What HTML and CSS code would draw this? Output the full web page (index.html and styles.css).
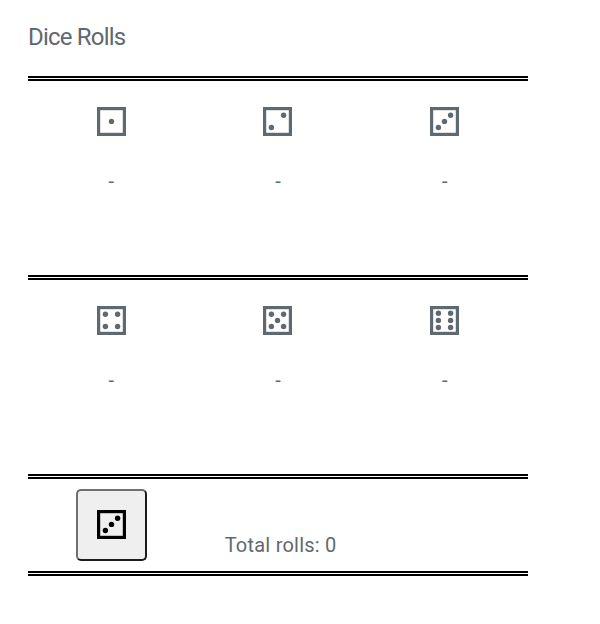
FILE: index.html
```html
<!DOCTYPE html>
<html lang="en"><head><meta charset="utf-8"><title>Dice Rolls</title>
<link rel="stylesheet" href="styles.css"></head>
<body>
<main class="board">
<h1 class="title">Dice Rolls</h1>
<section class="row">
<div class="cell"><svg class="die" viewBox="0 0 29 29"><rect x="1.6" y="1.6" width="25.8" height="25.8"/><circle cx="14.5" cy="14.4" r="2.7"/></svg><p class="count">-</p></div>
<div class="cell"><svg class="die" viewBox="0 0 29 29"><rect x="1.6" y="1.6" width="25.8" height="25.8"/><circle cx="20.6" cy="8.3" r="2.7"/><circle cx="8.4" cy="20.5" r="2.7"/></svg><p class="count">-</p></div>
<div class="cell"><svg class="die" viewBox="0 0 29 29"><rect x="1.6" y="1.6" width="25.8" height="25.8"/><circle cx="20.6" cy="8.3" r="2.7"/><circle cx="14.5" cy="14.4" r="2.7"/><circle cx="8.4" cy="20.5" r="2.7"/></svg><p class="count">-</p></div>
</section>
<section class="row">
<div class="cell"><svg class="die" viewBox="0 0 29 29"><rect x="1.6" y="1.6" width="25.8" height="25.8"/><circle cx="8.4" cy="8.3" r="2.7"/><circle cx="20.6" cy="8.3" r="2.7"/><circle cx="8.4" cy="20.5" r="2.7"/><circle cx="20.6" cy="20.5" r="2.7"/></svg><p class="count">-</p></div>
<div class="cell"><svg class="die" viewBox="0 0 29 29"><rect x="1.6" y="1.6" width="25.8" height="25.8"/><circle cx="8.4" cy="8.3" r="2.7"/><circle cx="20.6" cy="8.3" r="2.7"/><circle cx="14.5" cy="14.4" r="2.7"/><circle cx="8.4" cy="20.5" r="2.7"/><circle cx="20.6" cy="20.5" r="2.7"/></svg><p class="count">-</p></div>
<div class="cell"><svg class="die" viewBox="0 0 29 29"><rect x="1.6" y="1.6" width="25.8" height="25.8"/><circle cx="8.4" cy="7.3" r="2.7"/><circle cx="20.6" cy="7.3" r="2.7"/><circle cx="8.4" cy="14.4" r="2.7"/><circle cx="20.6" cy="14.4" r="2.7"/><circle cx="8.4" cy="21.5" r="2.7"/><circle cx="20.6" cy="21.5" r="2.7"/></svg><p class="count">-</p></div>
</section>
<footer class="controls">
<button class="roll" type="button" aria-label="Roll"><svg class="die" viewBox="0 0 29 29"><rect x="1.6" y="1.6" width="25.8" height="25.8"/><circle cx="20.6" cy="8.3" r="2.7"/><circle cx="14.5" cy="14.4" r="2.7"/><circle cx="8.4" cy="20.5" r="2.7"/></svg></button>
<p class="total">Total rolls: 0</p>
</footer>
</main>
</body></html>
```
FILE: styles.css
```css
* { box-sizing: border-box; }
body { margin: 0; background: #fff; color: #5f6971; font-family: Roboto, sans-serif; }
.board { width: 500px; margin-left: 28px; }
.title { height: 76px; margin: 0; padding-top: 22px; font-size: 24px; line-height: 30px; font-weight: 400; letter-spacing: -0.8px; }
.row { display: grid; grid-template-columns: repeat(3, 1fr); height: 199px; border-top: 5px double #000; }
.cell { display: flex; flex-direction: column; align-items: center; padding-top: 26px; }
.die { display: block; width: 29px; height: 29px; }
.die rect { fill: none; stroke: currentColor; stroke-width: 3.2; }
.die circle { fill: currentColor; }
.count { margin: 33px 0 0; font-size: 20px; line-height: 24px; }
.controls { display: grid; grid-template-columns: 1fr 2fr; height: 102px; border-top: 5px double #000; border-bottom: 5px double #000; }
.roll { display: flex; align-items: flex-start; justify-content: center; justify-self: center; width: 71px; height: 72px; margin-top: 10px; padding: 19px 0 0; border: 2px solid; border-color: #707070 #1c1c1c #1c1c1c #707070; border-radius: 5px; background: #efefef; color: #000; }
.total { margin: 54px 0 0 30px; font-size: 20px; line-height: 24px; letter-spacing: 0.23px; }
```
